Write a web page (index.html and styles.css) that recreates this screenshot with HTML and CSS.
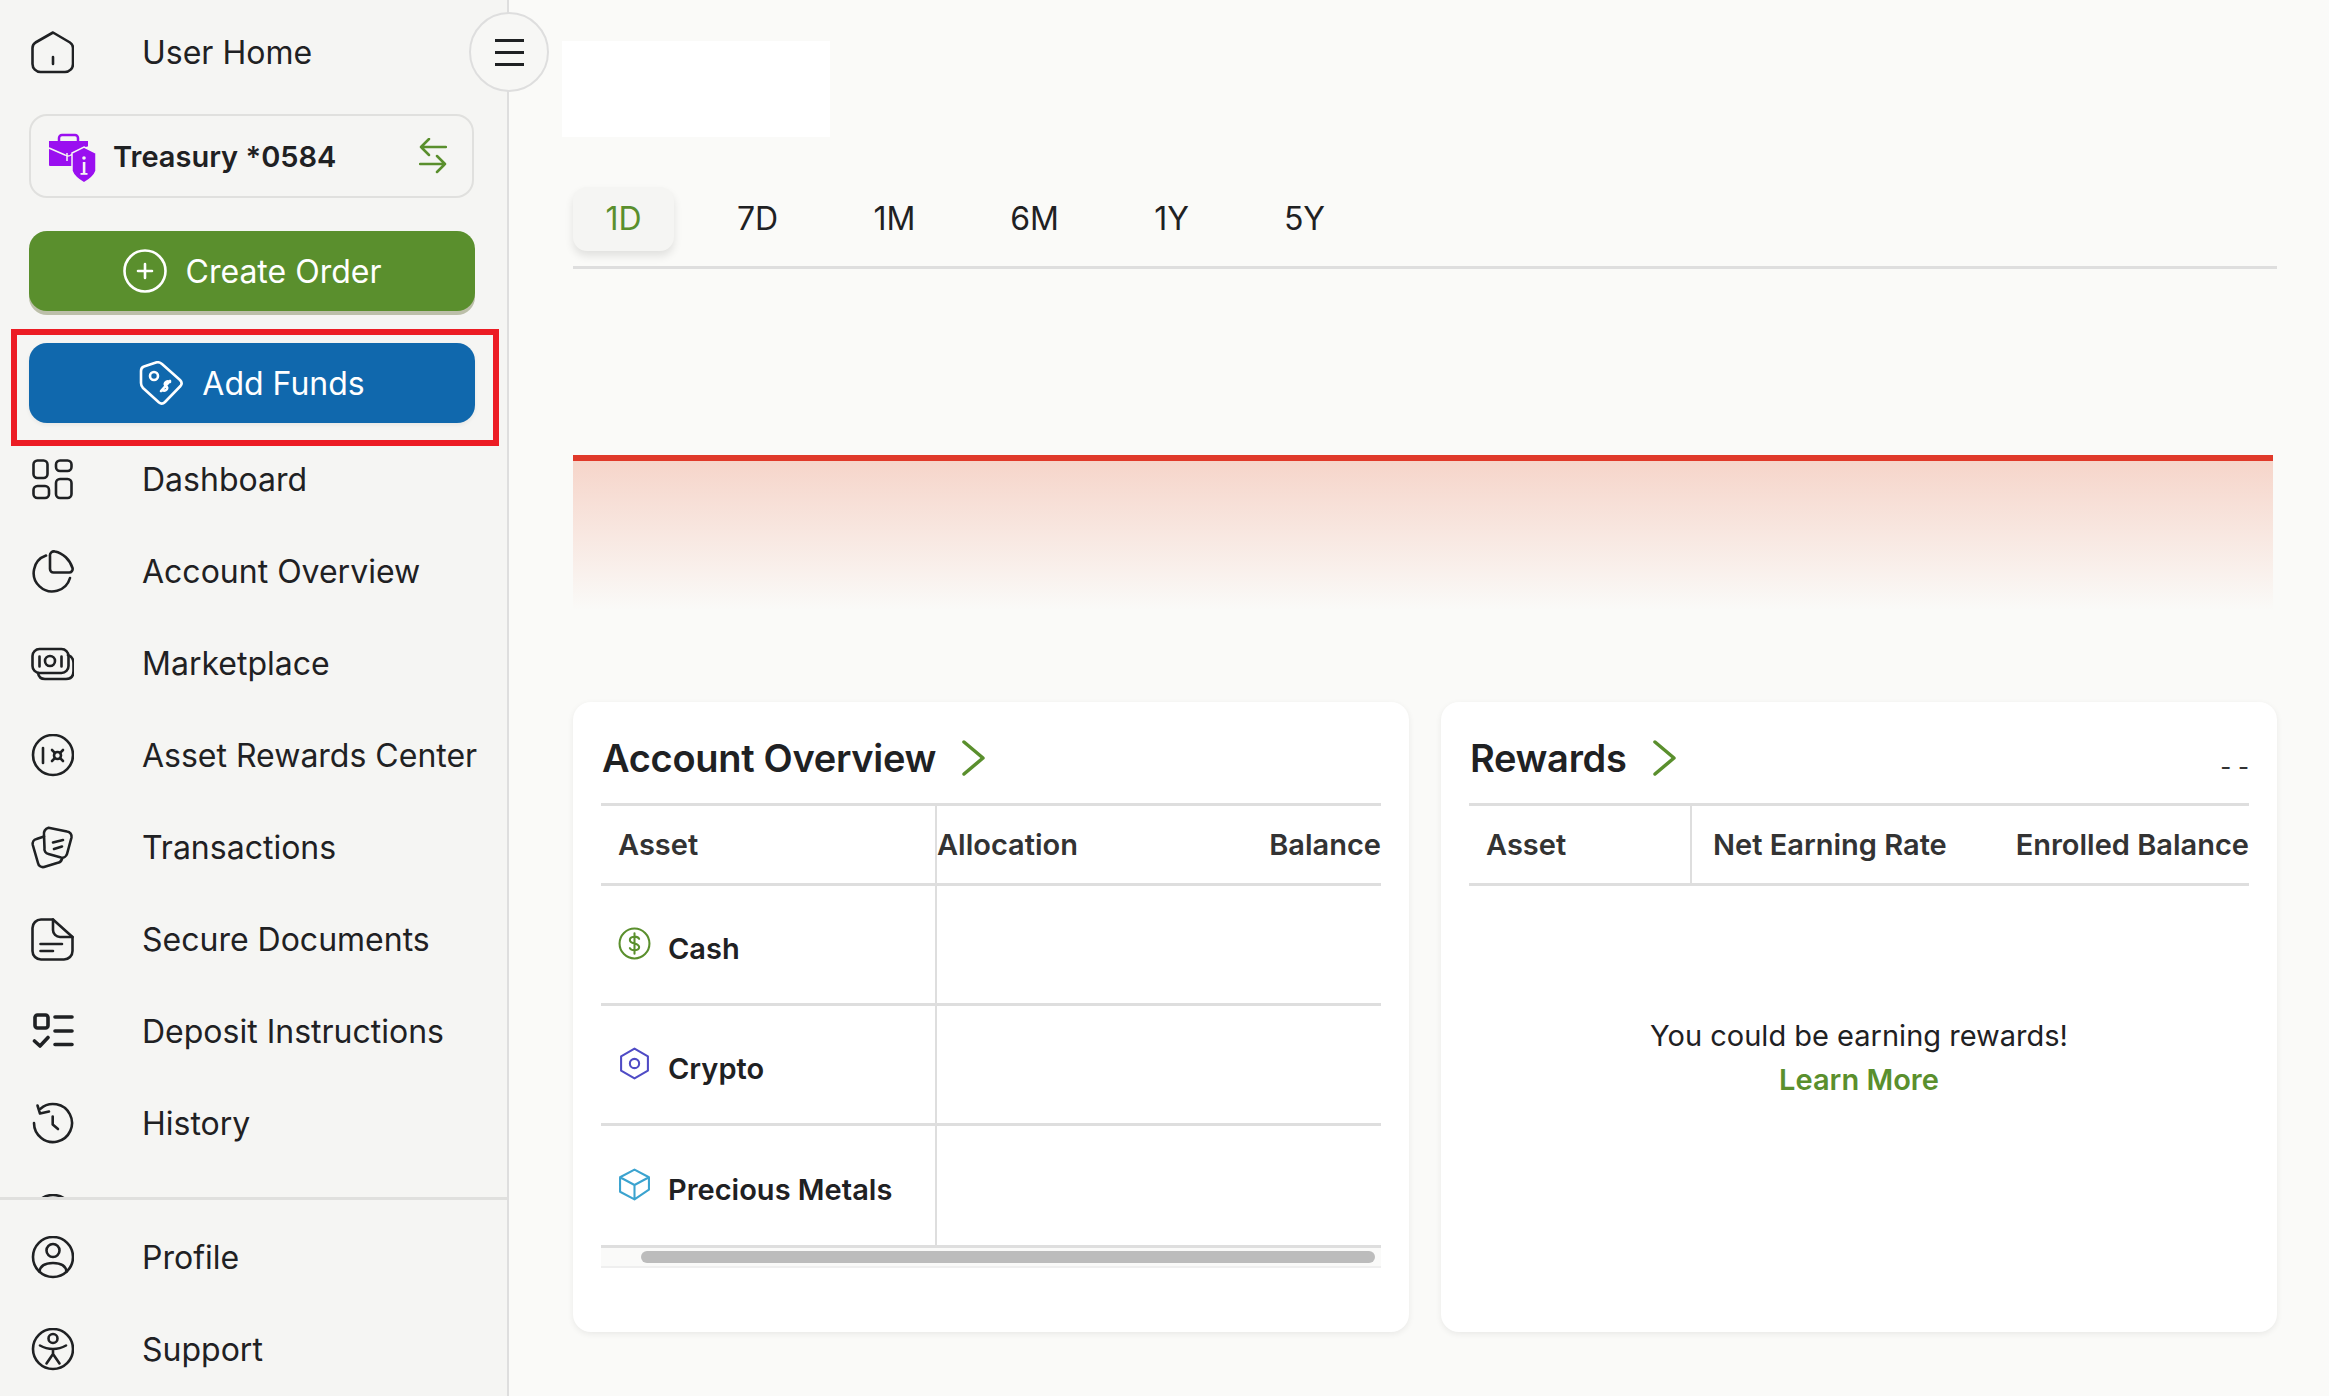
FILE: index.html
```html
<!DOCTYPE html>
<html lang="en">
<head>
<meta charset="utf-8">
<title>User Home</title>
<link rel="stylesheet" href="styles.css">
</head>
<body>
<div class="app">
  <aside class="sidebar">
    <a class="nav-item">
      <svg class="nav-icon" viewBox="0 0 44 44"><path d="M23 1.5 L5.5 11.5 Q2.5 13.5 2.5 17 V33 a8 8 0 0 0 8 8 H35 a8 8 0 0 0 8-8 V17 Q43 13.5 40 11.5 Z M23 26 V33"/></svg>
      <span>User Home</span>
    </a>
    <button class="toggle" aria-label="Toggle menu"><i></i><i></i><i></i></button>

    <div class="account">
      <svg class="account-logo" viewBox="0 0 48 50">
        <path class="logo-stroke" d="M11 8 V5 a3 3 0 0 1 3-3 H27 a3 3 0 0 1 3 3 V8"/>
        <path class="logo-fill" d="M1 8 H40 V30 H26 V33 H2 a1 1 0 0 1 -1-1 Z"/>
        <path class="logo-cut" d="M1 15 L17 22 Q20 24 23 22 L40 14 M19 20 V28"/>
        <path class="logo-shield" d="M36 14 L48 20 V38 Q46 44 36 50 Q26 44 24 38 V20 Z"/>
        <rect class="logo-i" x="34.8" y="29" width="2.6" height="12"/>
        <rect class="logo-i" x="32.5" y="40" width="7" height="1.8"/>
        <circle class="logo-i" cx="36" cy="25" r="1.8"/>
      </svg>
      <span class="account-name">Treasury *0584</span>
      <svg class="swap" viewBox="0 0 28 36"><path d="M27 9 H2 M10 1 L2 9 L10 17 M1 26 H26 M18 18 L26 26 L18 34"/></svg>
    </div>

    <button class="action action-green">
      <svg class="action-icon" viewBox="0 0 44 44"><circle cx="22" cy="22" r="20.5"/><path d="M22 15 V29 M15 22 H29"/></svg>
      <span>Create Order</span>
    </button>
    <button class="action action-blue">
      <svg class="action-icon" viewBox="0 0 44 44"><path d="M5 5.5 L17 1.5 Q20 0.5 23 3 L41 19 Q44 22 41.500 25 L26 41 Q23 44 20 41.500 L4 27 Q2 25 2 22 V10 Q2 6.500 5 5.500 Z"/><circle cx="15" cy="15" r="4"/><path d="M31 21 C27 19 24 23 27 25 C30 27 27 31 23 29 M31 20 L22 30"/></svg>
      <span>Add Funds</span>
    </button>
    <div class="highlight"></div>

    <nav class="nav-list">
      <a class="nav-item">
        <svg class="nav-icon" viewBox="0 0 44 44"><rect x="3.500" y="2.500" width="14" height="17.500" rx="4"/><rect x="26" y="2.500" width="15.500" height="10.500" rx="4"/><rect x="3.500" y="28" width="15.500" height="12" rx="4"/><rect x="26" y="21" width="15.500" height="19" rx="4"/></svg>
        <span>Dashboard</span>
      </a>
      <a class="nav-item">
        <svg class="nav-icon" viewBox="0 0 44 44"><path d="M16 5.500 A18.500 18.500 0 1 0 40 28"/><path d="M20 6 a4 4 0 0 1 5-4.500 C33 3 40 10 42.500 18 a3.500 3.500 0 0 1 -3.500 4.500 H23.500 a3.500 3.500 0 0 1 -3.500-3.500 Z"/></svg>
        <span>Account Overview</span>
      </a>
      <a class="nav-item">
        <svg class="nav-icon" viewBox="0 0 44 44"><rect x="2.500" y="7" width="36" height="24" rx="7"/><path d="M38 13 Q43.500 15 43.500 21 V29 Q43.500 37 36 37 H15 Q9 37 8 31"/><circle cx="20" cy="19" r="5"/><path d="M9.500 14.500 V24.500 M31.500 14.500 V24.500"/></svg>
        <span>Marketplace</span>
      </a>
      <a class="nav-item">
        <svg class="nav-icon" viewBox="0 0 44 44"><circle cx="23" cy="21" r="20"/><path d="M13 14 V29"/><circle cx="27.500" cy="21.500" r="3.500"/><path d="M22 16 L24.800 18.800 M33 16 L30.200 18.800 M22 27 L24.800 24.200 M33 27 L30.200 24.200"/></svg>
        <span>Asset Rewards Center</span>
      </a>
      <a class="nav-item">
        <svg class="nav-icon" viewBox="0 0 44 44"><path d="M18.500 1.800 L37 5.500 a5 5 0 0 1 4.500 6 L37 28 a5 5 0 0 1 -6 3.500 L18.500 28 a5 5 0 0 1 -4 -6 L14 9 a6 6 0 0 1 4.500-7.200 Z"/><path d="M23 16.500 L33 14 M24 23 L32 20.500"/><path d="M14 10.500 L6.500 13 a5 5 0 0 0 -3.700 6 L8 37 a5 5 0 0 0 6 4 L27 37 a6 6 0 0 0 5-4"/></svg>
        <span>Transactions</span>
      </a>
      <a class="nav-item">
        <svg class="nav-icon" viewBox="0 0 44 44"><path d="M23 1.500 H11 a8.500 8.500 0 0 0 -8.500 8.500 V33 a8.500 8.500 0 0 0 8.500 8.500 H34 a8.500 8.500 0 0 0 8.500-8.500 V19 Z"/><path d="M23 1.500 V12 a7 7 0 0 0 7 7 H42.500"/><path d="M10.500 26 H32 M10.500 33 H23"/></svg>
        <span>Secure Documents</span>
      </a>
      <a class="nav-item">
        <svg class="nav-icon icon-bold" viewBox="0 0 44 44"><rect x="5" y="5" width="13" height="13" rx="2.500"/><path d="M25 7 H42 M25 21 H42 M25 34.500 H42 M4.500 31 L10 36 L18 27.500"/></svg>
        <span>Deposit Instructions</span>
      </a>
      <a class="nav-item">
        <svg class="nav-icon" viewBox="0 0 44 44"><path d="M10.500 6.700 A19 19 0 1 1 4 21"/><path d="M7.500 3.500 L10 11.500 L19 9.500 M22.700 14.500 V22.500 L28 27"/></svg>
        <span>History</span>
      </a>
      <a class="nav-item">
        <svg class="nav-icon" viewBox="0 0 44 44"><circle cx="23" cy="21" r="20"/></svg>
      </a>
    </nav>

    <div class="nav-footer">
      <a class="nav-item">
        <svg class="nav-icon" viewBox="0 0 44 44"><circle cx="23" cy="21" r="20"/><circle cx="23" cy="14.500" r="6.500"/><path d="M9.500 36 C10 29.500 16 27 23 27 S36 29.500 36.500 36"/></svg>
        <span>Profile</span>
      </a>
      <a class="nav-item">
        <svg class="nav-icon" viewBox="0 0 44 44"><circle cx="23" cy="21" r="20"/><circle cx="23" cy="10.500" r="4.500"/><path d="M10 17.500 Q16 21 23 21 T36 17.500 M23 21 V26 L16.500 35.500 M23 26 L29.500 35.500"/></svg>
        <span>Support</span>
      </a>
    </div>
  </aside>

  <main class="main">
    <div class="value-placeholder"></div>
    <div class="ranges">
      <button class="range range-active">1D</button>
      <button class="range r7d">7D</button>
      <button class="range r1m">1M</button>
      <button class="range r6m">6M</button>
      <button class="range r1y">1Y</button>
      <button class="range r5y">5Y</button>
    </div>
    <div class="chart"><div class="chart-line"></div><div class="chart-fill"></div></div>

    <div class="cards">
      <section class="card">
        <header class="card-head">
          <h2>Account Overview</h2>
          <svg class="chevron" viewBox="0 0 24 36"><path d="M2 2 L21 18 L2 34"/></svg>
        </header>
        <div class="table overview-table">
          <div class="row row-head">
            <div class="cell cell-first th-pad">Asset</div>
            <div class="cell">Allocation</div>
            <div class="cell cell-end">Balance</div>
          </div>
          <div class="row row-body">
            <div class="cell cell-first asset">
              <svg class="asset-icon green" viewBox="0 0 32 32"><circle cx="16" cy="16" r="14.500"/><path d="M20.500 11.500 C19 8.500 11.500 8.500 11.500 12.500 C11.500 17 20.500 15 20.500 19.500 C20.500 23.500 13 23.500 11.500 20.500 M16 6 V26"/></svg>
              <span>Cash</span>
            </div>
            <div class="cell"></div><div class="cell"></div>
          </div>
          <div class="row row-body">
            <div class="cell cell-first asset">
              <svg class="asset-icon violet" viewBox="0 0 32 32"><path d="M16 1.500 L29 9 V23 L16 30.500 L3 23 V9 Z"/><circle cx="16" cy="16" r="4.500"/></svg>
              <span>Crypto</span>
            </div>
            <div class="cell"></div><div class="cell"></div>
          </div>
          <div class="row row-body row-last">
            <div class="cell cell-first asset">
              <svg class="asset-icon cyan" viewBox="0 0 32 32"><path d="M16 1.500 L30 9 V21 L16 30.500 L2 23 V9 Z M2 9 L16 16.500 L30 9 M16 16.500 V30.500"/></svg>
              <span>Precious Metals</span>
            </div>
            <div class="cell"></div><div class="cell"></div>
          </div>
          <div class="scroll-track"><div class="scroll-thumb"></div></div>
        </div>
      </section>

      <section class="card">
        <header class="card-head">
          <h2>Rewards</h2>
          <svg class="chevron" viewBox="0 0 24 36"><path d="M2 2 L21 18 L2 34"/></svg>
          <span class="dashes">- -</span>
        </header>
        <div class="table rewards-table">
          <div class="row row-head">
            <div class="cell cell-first th-pad">Asset</div>
            <div class="cell rate">Net Earning Rate</div>
            <div class="cell cell-end">Enrolled Balance</div>
          </div>
        </div>
        <div class="empty">
          <p>You could be earning rewards!</p>
          <a class="learn">Learn More</a>
        </div>
      </section>
    </div>
  </main>
</div>
</body>
</html>
```
FILE: styles.css
```css
* { box-sizing: border-box; }
html, body { margin: 0; height: 100%; overflow: hidden; }
body { font-family: Inter, "Liberation Sans", sans-serif; color: #1f2123; background: #fafaf8; }
button { font-family: inherit; border: 0; cursor: pointer; }
h2, p { margin: 0; }

.app { display: flex; height: 1396px; }

/* Sidebar */
.sidebar { position: relative; flex: 0 0 509px; height: 100%; display: flex; flex-direction: column; padding-top: 7px; background: #f5f5f3; border-right: 2px solid #dedede; }
.nav-item { flex: 0 0 92px; height: 92px; display: flex; align-items: center; gap: 68px; padding-left: 30px; font-size: 32px; line-height: 1; }
.nav-icon { flex: 0 0 44px; width: 44px; height: 44px; fill: none; stroke: #1f2123; stroke-width: 2.600; stroke-linecap: round; stroke-linejoin: round; }
.icon-bold { stroke-width: 3.600; }

.toggle { position: absolute; top: 12px; left: 469px; width: 80px; height: 80px; border-radius: 50%; background: #f7f7f5; border: 2px solid #dedede; display: flex; flex-direction: column; align-items: center; justify-content: center; gap: 9px; padding: 0; }
.toggle i { display: block; width: 29px; height: 3px; background: #1f2123; }

.account { flex: 0 0 84px; margin: 15px 33px 0 29px; display: flex; align-items: center; padding: 0 0 0 17px; border: 2.500px solid #e0e0de; border-radius: 18px; }
.account-logo { flex: 0 0 48px; width: 48px; height: 50px; margin-top: 4px; }
.logo-stroke { fill: none; stroke: #9a0ff0; stroke-width: 2.500; }
.logo-fill, .logo-shield { fill: #9a0ff0; }
.logo-shield { stroke: #f5f5f3; stroke-width: 1.500; }
.logo-cut { fill: none; stroke: #f5f5f3; stroke-width: 1.500; }
.logo-i { fill: #f5f5f3; }
.account-name { margin-left: 17px; font-size: 29px; font-weight: 600; white-space: nowrap; flex: 1; }
.swap { flex: 0 0 28px; width: 28px; height: 36px; margin-right: 25px; fill: none; stroke: #5a8f2d; stroke-width: 2.500; stroke-linecap: round; stroke-linejoin: round; }

.action { flex: 0 0 80px; margin-left: 29px; width: 446px; display: flex; align-items: center; justify-content: center; gap: 19px; color: #fff; font-size: 32px; border-radius: 18px; }
.action-icon { width: 44px; height: 44px; fill: none; stroke: #fff; stroke-width: 2.600; stroke-linecap: round; stroke-linejoin: round; }
.action-green { margin-top: 33px; background: #5a8f2d; box-shadow: 0 4px 0 #bcbfa9; }
.action-blue { margin-top: 32px; background: #1068ad; box-shadow: 0 2px 4px rgba(0, 0, 0, .06); }
.highlight { position: absolute; left: 11px; top: 329px; width: 488px; height: 117px; border: 6px solid #ec1c24; pointer-events: none; }

.nav-list { flex: 1; min-height: 0; overflow: hidden; margin-top: 11px; display: flex; flex-direction: column; }
.nav-footer { flex: 0 0 auto; border-top: 3px solid #e0e0de; padding-top: 12px; }

/* Main */
.main { flex: 1; min-width: 0; padding: 41px 52px 0 64px; }
.value-placeholder { width: 268px; height: 96px; margin-left: -11px; background: #fff; }
.ranges { position: relative; display: flex; align-items: center; height: 81px; margin-top: 51px; border-bottom: 3px solid #dedede; padding-bottom: 17px; }
.range { background: none; font-size: 32px; color: #1f2123; padding: 0; height: 64px; width: 101px; text-align: center; }
.range-active { color: #5a8f2d; background: #f5f5f3; border-radius: 14px; box-shadow: 0 5px 9px rgba(0, 0, 0, .1); }
.r7d { margin-left: 33px; }
.r1m { margin-left: 36px; }
.r6m { margin-left: 39px; }
.r1y { margin-left: 36px; }
.r5y { margin-left: 32px; }

.chart { margin-top: 186px; height: 155px; padding-right: 4px; }
.chart-line { height: 6px; background: #e0392a; }
.chart-fill { height: 149px; background: linear-gradient(#f6d5ca, rgba(250, 250, 248, 0)); }

.cards { display: flex; gap: 32px; margin-top: 92px; }
.card { flex: 1; height: 630px; display: flex; flex-direction: column; padding: 0 28px; background: #fff; border-radius: 18px; box-shadow: 0 2px 6px rgba(0, 0, 0, .07); }
.card-head { display: flex; align-items: center; height: 101px; padding-top: 10px; }
.card-head h2 { font-size: 38px; font-weight: 600; letter-spacing: -.3px; margin-left: 1px; }
.chevron { width: 24px; height: 36px; margin-left: 26px; fill: none; stroke: #5a8f2d; stroke-width: 3.500; stroke-linecap: round; stroke-linejoin: round; }
.dashes { margin-left: auto; margin-top: 17px; font-size: 24px; color: #333; white-space: pre; }

.table { border-top: 3px solid #dedede; }
.row { display: grid; border-bottom: 3px solid #dedede; }
.overview-table .row { grid-template-columns: 336px 1fr auto; }
.rewards-table .row { grid-template-columns: 223px 1fr auto; }
.row-head { height: 80px; font-size: 29px; font-weight: 600; color: #333; }
.row-body { height: 120px; }
.row-last { height: 122px; }
.cell { display: flex; align-items: center; }
.cell-first { border-right: 2px solid #dedede; }
.th-pad { padding-left: 17px; }
.rate { padding-left: 21px; }
.cell-end { justify-content: flex-end; }

.asset { gap: 17px; padding-left: 17px; font-size: 29px; font-weight: 600; color: #1f2123; }
.asset span { margin-top: 8px; }
.asset-icon { width: 33px; height: 33px; fill: none; stroke-width: 2; stroke-linecap: round; stroke-linejoin: round; margin-top: -2px; flex: none; }
.green { stroke: #5a8f2d; }
.violet { stroke: #4f4bc5; }
.cyan { stroke: #3ba3cf; }

.scroll-track { height: 20px; padding: 3px 6px 3px 40px; background: #fafaf9; border-bottom: 2px solid #efefef; }
.scroll-thumb { height: 12px; border-radius: 6px; background: #bcbcbc; }

.empty { display: flex; flex-direction: column; align-items: center; margin-top: 128px; font-size: 29px; }
.empty p { line-height: 44px; }
.learn { color: #5a8f2d; font-weight: 600; line-height: 44px; }
```
